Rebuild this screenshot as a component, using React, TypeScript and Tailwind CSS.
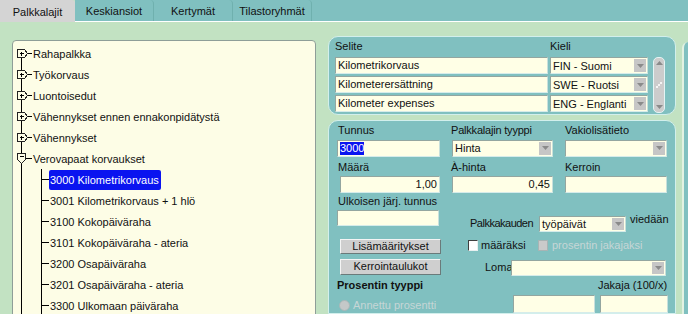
import React from "react";

const DownArrow = () => (
  <svg width="7" height="4" viewBox="0 0 7 4">
    <path d="M0 0h7L3.5 4z" fill="#8a8a8a" />
  </svg>
);

const Input = ({ className, value = "", right = false, selected = false }: { className: string; value?: string; right?: boolean; selected?: boolean }) => (
  <div
    className={`${className} flex items-center overflow-hidden border border-[#93a6a0] border-b-[#d6ecea] border-r-[#c8e0dc] bg-[#ffffe6] px-[2px] leading-[13px] ${right ? "justify-end" : ""}`}
  >
    {selected ? <span className="bg-[#0a14f0] text-white">{value}</span> : value}
  </div>
);

const Select = ({ className, value = "" }: { className: string; value?: string }) => (
  <div className={`${className} flex items-stretch overflow-hidden border border-[#93a6a0] border-b-[#d6ecea] border-r-[#c8e0dc] bg-[#ffffe6]`}>
    <span className="flex flex-1 items-center px-[2px] pt-px leading-[13px]">{value}</span>
    <span className="my-px mr-px flex w-[12px] items-center justify-center bg-[#c6c6c6]">
      <DownArrow />
    </span>
  </div>
);

const Button = ({ label }: { label: string }) => (
  <div className="flex w-[101px] h-[16px] items-center justify-center border border-t-[#f4f4f4] border-l-[#f4f4f4] border-b-[#6a7a7a] border-r-[#6a7a7a] bg-[#cfcfcf] leading-[13px]">
    {label}
  </div>
);

type Node = { label: string; kind: "closed" | "open" | "child"; first?: boolean; selected?: boolean };

const tree: Node[] = [
  { label: "Rahapalkka", kind: "closed", first: true },
  { label: "Työkorvaus", kind: "closed" },
  { label: "Luontoisedut", kind: "closed" },
  { label: "Vähennykset ennen ennakonpidätystä", kind: "closed" },
  { label: "Vähennykset", kind: "closed" },
  { label: "Verovapaat korvaukset", kind: "open" },
  { label: "3000 Kilometrikorvaus", kind: "child", selected: true },
  { label: "3001 Kilometrikorvaus + 1 hlö", kind: "child" },
  { label: "3100 Kokopäiväraha", kind: "child" },
  { label: "3101 Kokopäiväraha - ateria", kind: "child" },
  { label: "3200 Osapäiväraha", kind: "child" },
  { label: "3201 Osapäiväraha - ateria", kind: "child" },
  { label: "3300 Ulkomaan päiväraha", kind: "child" },
];

const TreeLines = ({ node }: { node: Node }) => {
  if (node.kind === "child") {
    return (
      <svg width="36" height="21" shapeRendering="crispEdges" className="shrink-0">
        <path d="M8.5 0V21M28.5 0V21M28.5 10.5H36" stroke="#000" />
      </svg>
    );
  }
  if (node.kind === "open") {
    return (
      <svg width="19" height="21" shapeRendering="crispEdges" className="shrink-0">
        <path d="M8.5 0V21M12.5 10.5H19" stroke="#000" />
        <polygon points="4.5,5.5 12.5,5.5 12.5,11.5 8.5,15.5 4.5,11.5" fill="#fdfde6" stroke="#222" />
        <path d="M6.5 8.5H10.5" stroke="#000" />
      </svg>
    );
  }
  return (
    <svg width="19" height="21" shapeRendering="crispEdges" className="shrink-0">
      <path d={node.first ? "M8.5 6V21M14.5 10.5H19" : "M8.5 0V21M14.5 10.5H19"} stroke="#000" />
      <polygon points="4.5,6.5 11.5,6.5 14.5,10.5 11.5,14.5 4.5,14.5" fill="#fdfde6" stroke="#222" />
      <path d="M6.5 10.5H10.5M8.5 8.5V12.5" stroke="#000" />
    </svg>
  );
};

const Tabs = () => (
  <div className="flex h-[22px]">
    <div className="flex w-[75px] items-center justify-center rounded-tr-[3px] bg-[#d4d4d4] pt-[2px]">Palkkalajit</div>
    <div className="flex flex-1 border-b border-white bg-[#80c0c0]">
      {["Keskiansiot", "Kertymät", "Tilastoryhmät"].map((t) => (
        <div
          key={t}
          className="flex w-[79px] items-center justify-center rounded-tr-[4px] border-r border-[#6fb0ae] pt-[2px]"
        >
          {t}
        </div>
      ))}
    </div>
  </div>
);

export default function App() {
  return (
    <div className="w-[688px] h-[314px] overflow-hidden bg-[#c2e2c2] font-['Liberation_Sans',Arial,sans-serif] text-[11px] text-[#111]">
      <Tabs />
      <div className="flex h-[292px]">
        {/* tree */}
        <div className="ml-[12px] mt-[18px] h-[300px] w-[304px] overflow-hidden rounded-t-[4px] border border-[#8e9e98] bg-[#fdfde6] pt-[2px]">
          {tree.map((n) => (
            <div key={n.label} className="flex h-[21px] items-center">
              <TreeLines node={n} />
              <span
                className={`whitespace-nowrap pl-px pr-[2px] leading-[20px] ${
                  n.selected ? "h-[20px] rounded-[2px] bg-[#0a14f0] text-white" : ""
                }`}
              >
                {n.label}
              </span>
            </div>
          ))}
        </div>

        {/* right column */}
        <div className="ml-[12px] mt-[14px] flex w-[348px] flex-col gap-[5px]">
          <div className="h-[81px] rounded-[10px] border border-[#d2efec] bg-[#80c0c0] pl-[6px]">
            <div className="flex h-[20px] pt-[3px] leading-[13px]">
              <span className="w-[215px]">Selite</span>
              <span>Kieli</span>
            </div>
            <div className="flex">
              <div className="flex w-[213px] flex-col gap-[2px]">
                <Input className="h-[17px] w-[213px]" value="Kilometrikorvaus" />
                <Input className="h-[17px] w-[213px]" value="Kilometerersättning" />
                <Input className="h-[17px] w-[213px]" value="Kilometer expenses" />
              </div>
              <div className="ml-[2px] flex flex-col gap-[2px]">
                <Select className="h-[17px] w-[98px]" value="FIN - Suomi" />
                <Select className="h-[17px] w-[98px]" value="SWE - Ruotsi" />
                <Select className="h-[17px] w-[98px]" value="ENG - Englanti" />
              </div>
              <div className="ml-[5px] flex h-[56px] w-[12px] flex-col items-center justify-between rounded-[5px] border border-[#e4f4f4] bg-[#cccccc] py-[3px]">
                <svg width="7" height="4" viewBox="0 0 7 4">
                  <path d="M0 4h7L3.5 0z" fill="#8a8a8a" />
                </svg>
                <svg width="6" height="6" viewBox="0 0 6 6">
                  <path d="M4 0h2v2H4zM2 2h2v2H2zM0 4h2v2H0z" fill="#f4f4f4" />
                </svg>
                <DownArrow />
              </div>
            </div>
          </div>

          <div className="h-[200px] rounded-t-[10px] border border-[#d2efec] bg-[#80c0c0]">
            <div className="flex h-[19px] pl-[9px] pt-[3px] leading-[13px]">
              <span className="w-[113px]">Tunnus</span>
              <span className="w-[114px] tracking-[-0.2px]">Palkkalajin tyyppi</span>
              <span>Vakiolisätieto</span>
            </div>
            <div className="flex h-[17px] pl-[8px]">
              <Input className="h-[17px] w-[103px]" value="3000" selected />
              <Select className="ml-[12px] h-[17px] w-[101px]" value="Hinta" />
              <Select className="ml-[12px] h-[17px] w-[102px]" />
            </div>
            <div className="flex h-[19px] pl-[9px] pt-[4px] leading-[13px]">
              <span className="w-[113px]">Määrä</span>
              <span className="w-[114px]">À-hinta</span>
              <span>Kerroin</span>
            </div>
            <div className="flex h-[17px] pl-[11px]">
              <Input className="h-[17px] w-[100px]" value="1,00" right />
              <Input className="ml-[12px] h-[17px] w-[101px]" value="0,45" right />
              <Input className="ml-[12px] h-[17px] w-[102px]" />
            </div>
            <div className="h-[17px] pl-[9px] pt-[2px] leading-[13px]">Ulkoisen järj. tunnus</div>
            <div className="flex h-[22px] items-start pl-[8px]">
              <Input className="h-[16px] w-[102px]" />
              <span className="ml-[31px] mt-[7px] w-[69px] tracking-[-0.5px] leading-[13px]">Palkkakauden</span>
              <Select className="mt-[6px] h-[16px] w-[87px]" value="työpäivät" />
              <span className="ml-[4px] mt-[3px] leading-[13px]">viedään</span>
            </div>
            <div className="mt-[7px] flex h-[15px] items-start pl-[11px]">
              <div className="flex h-[15px] w-[101px] items-center justify-center border border-t-[#f4f4f4] border-l-[#f4f4f4] border-b-[#6a7a7a] border-r-[#6a7a7a] bg-[#cfcfcf] leading-[13px]">
                Lisämääritykset
              </div>
              <span className="ml-[27px] mt-px h-[11px] w-[10px] border border-t-[#404040] border-l-[#404040] border-b-[#e8f0f0] border-r-[#e8f0f0] bg-white" />
              <span className="ml-[3px] w-[57px] leading-[13px]">määräksi</span>
              <span className="mt-px h-[11px] w-[10px] border border-[#a8b4b4] bg-[#cacaca]" />
              <span className="ml-[4px] leading-[13px] text-[#c6d6d6]">prosentin jakajaksi</span>
            </div>
            <div className="mt-[5px] flex h-[17px] items-start pl-[11px]">
              <Button label="Kerrointaulukot" />
              <span className="ml-[44px] mt-[2px] w-[26px] leading-[13px]">Loma</span>
              <Select className="mt-px h-[16px] w-[155px]" />
            </div>
            <div className="mt-[3px] flex h-[13px] pl-[8px] leading-[13px]">
              <span className="w-[261px] font-bold">Prosentin tyyppi</span>
              <span>Jakaja (100/x)</span>
            </div>
            <div className="mt-[3px] flex items-start pl-[10px]">
              <div className="mt-[4px] flex w-[174px] items-center">
                <span className="h-[11px] w-[11px] rounded-full border border-[#a8b8b8] bg-[#c4c8c8]" />
                <span className="ml-[3px] leading-[13px] text-[#c6d6d6]">Annettu prosentti</span>
              </div>
              <Input className="h-[18px] w-[82px]" />
              <Input className="ml-[5px] h-[18px] w-[68px]" />
            </div>
          </div>
        </div>

        <div className="ml-[6px] mt-[20px] h-[300px] w-[6px] rounded-tl-[6px] border-l-2 border-[#e2f2e2] bg-[#80c0c0]" />
      </div>
    </div>
  );
}
